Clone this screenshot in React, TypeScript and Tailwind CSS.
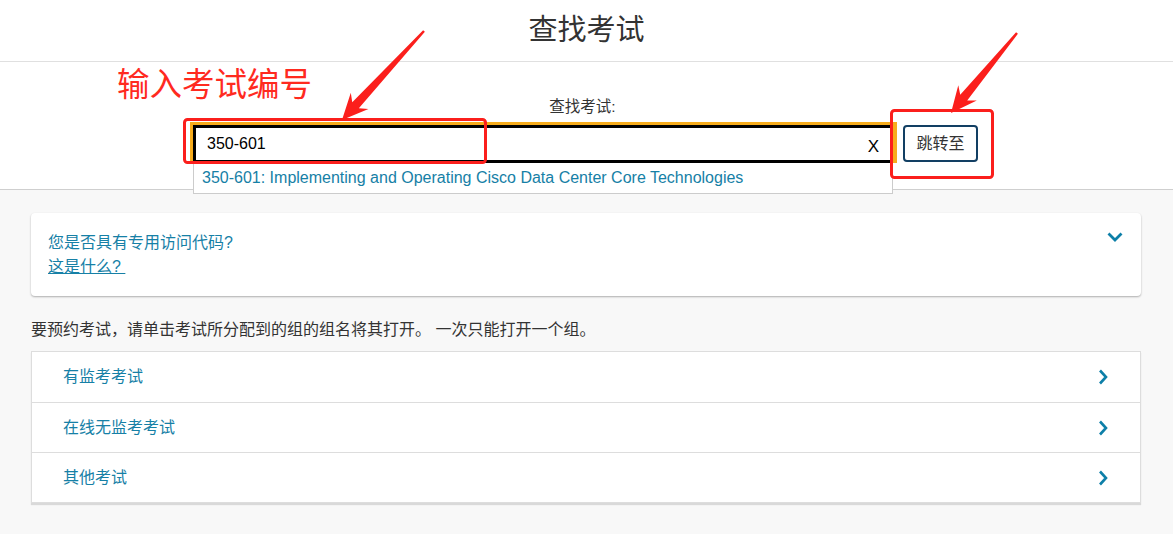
import React from 'react';

const cjk = "font-['Liberation_Sans','Noto_Sans_CJK_SC',sans-serif]";

type Pt = [number, number];

// annotation arrow: thin tail growing into a swept head
const arrowPoints = (tail: Pt, tip: Pt) => {
  const dx = tip[0] - tail[0];
  const dy = tip[1] - tail[1];
  const len = Math.hypot(dx, dy);
  const u: Pt = [dx / len, dy / len];
  const n: Pt = [-u[1], u[0]];
  const at = (d: number, w: number): string =>
    `${tip[0] - u[0] * d + n[0] * w},${tip[1] - u[1] * d + n[1] * w}`;
  return [
    at(len, 1.2),
    at(20, 4.5),
    at(26, 12),
    at(0, 0),
    at(26, -12),
    at(20, -4.5),
    at(len, -1.2)
  ].join(' ');
};

const ChevronRight = () => (
  <svg width="10" height="16" viewBox="0 0 10 16" className="text-[#0d7fa8]">
    <path d="M2 1.5 L8 8 L2 14.5" fill="none" stroke="currentColor" strokeWidth="2.6" />
  </svg>
);

const groups = ['有监考考试', '在线无监考考试', '其他考试'];

export default function App() {
  return (
    <div className={`relative min-h-[534px] bg-[#f8f8f8] ${cjk}`}>
      <header className="flex h-[62px] items-center justify-center border-b border-[#e0e0e0] bg-white">
        <h1 className="text-[29px] leading-none text-[#333]">查找考试</h1>
      </header>

      <section className="h-[128px] border-b border-[#cfcfcf] bg-white pt-[35px]">
        <p className="pr-[8px] text-center text-[15.5px] leading-5 text-[#333]">查找考试:</p>
        <div className="mt-[5px] flex items-start justify-center gap-[6px] pr-[5px]">
          <div className="relative w-[707px] bg-[#f7ac1c] pl-[3px] pr-[4px] pt-[3px]">
            <div className="flex h-[38px] items-center justify-between border-[3px] border-black bg-white pl-[11px] pr-[11px]">
              <span className="text-base text-black">350-601</span>
              <span className="mt-[6px] text-[17px] text-black">X</span>
            </div>
            <div className="absolute left-[3px] top-full z-10 flex h-[31px] w-[700px] items-center border border-t-0 border-[#ccc] bg-white pl-[8px] text-base text-[#1680a6]">
              350-601: Implementing and Operating Cisco Data Center Core Technologies
            </div>
          </div>
          <button
            type="button"
            className="mt-[3px] h-[37px] w-[75px] rounded-[4px] border-2 border-[#123f63] bg-white text-base text-[#333]"
          >
            跳转至
          </button>
        </div>
      </section>

      <main className="px-[31px] pr-[32px] pt-[23px]">
        <div className="flex items-start justify-between rounded-[4px] bg-white pb-[17px] pl-[17px] pr-[18px] pt-[18px] shadow-[0_1px_2px_rgba(0,0,0,0.3)]">
          <div className="text-base leading-6 text-[#1680a6]">
            <p>您是否具有专用访问代码?</p>
            <a href="#" className="underline">这是什么?&nbsp;</a>
          </div>
          <svg width="16" height="10" viewBox="0 0 16 10" className="mt-[1px] text-[#0d7fa8]">
            <path d="M1.5 1.5 L8 8 L14.5 1.5" fill="none" stroke="currentColor" strokeWidth="2.8" />
          </svg>
        </div>

        <p className="mt-[22px] text-base leading-6 text-[#333]">
          要预约考试，请单击考试所分配到的组的组名将其打开。 一次只能打开一个组。
        </p>

        <div className="mt-[9px] border border-[#ddd] bg-white shadow-[0_2px_1px_rgba(0,0,0,0.12)]">
          {groups.map((g, i) => (
            <div
              key={g}
              className={`flex h-[50px] items-center justify-between pl-[31px] pr-[32px] text-base text-[#1680a6] ${
                i > 0 ? 'border-t border-[#ddd]' : ''
              }`}
            >
              <span>{g}</span>
              <ChevronRight />
            </div>
          ))}
        </div>
      </main>

      {/* red annotations on top of the screenshot */}
      <span className="absolute left-[117px] top-[65px] text-[32.5px] leading-10 text-[#ff2a1f]">输入考试编号</span>
      <svg className="pointer-events-none absolute inset-0 z-20" width="1173" height="534">
        <rect x="184.5" y="119.5" width="301" height="43" rx="3" fill="none" stroke="#fb1f1c" strokeWidth="3" />
        <rect x="891.5" y="110.5" width="101" height="67" rx="3" fill="none" stroke="#fb1f1c" strokeWidth="3" />
        <polygon points={arrowPoints([424, 31], [342, 120])} fill="#fb1f1c" />
        <polygon points={arrowPoints([1017, 33], [951, 113])} fill="#fb1f1c" />
      </svg>
    </div>
  );
}
